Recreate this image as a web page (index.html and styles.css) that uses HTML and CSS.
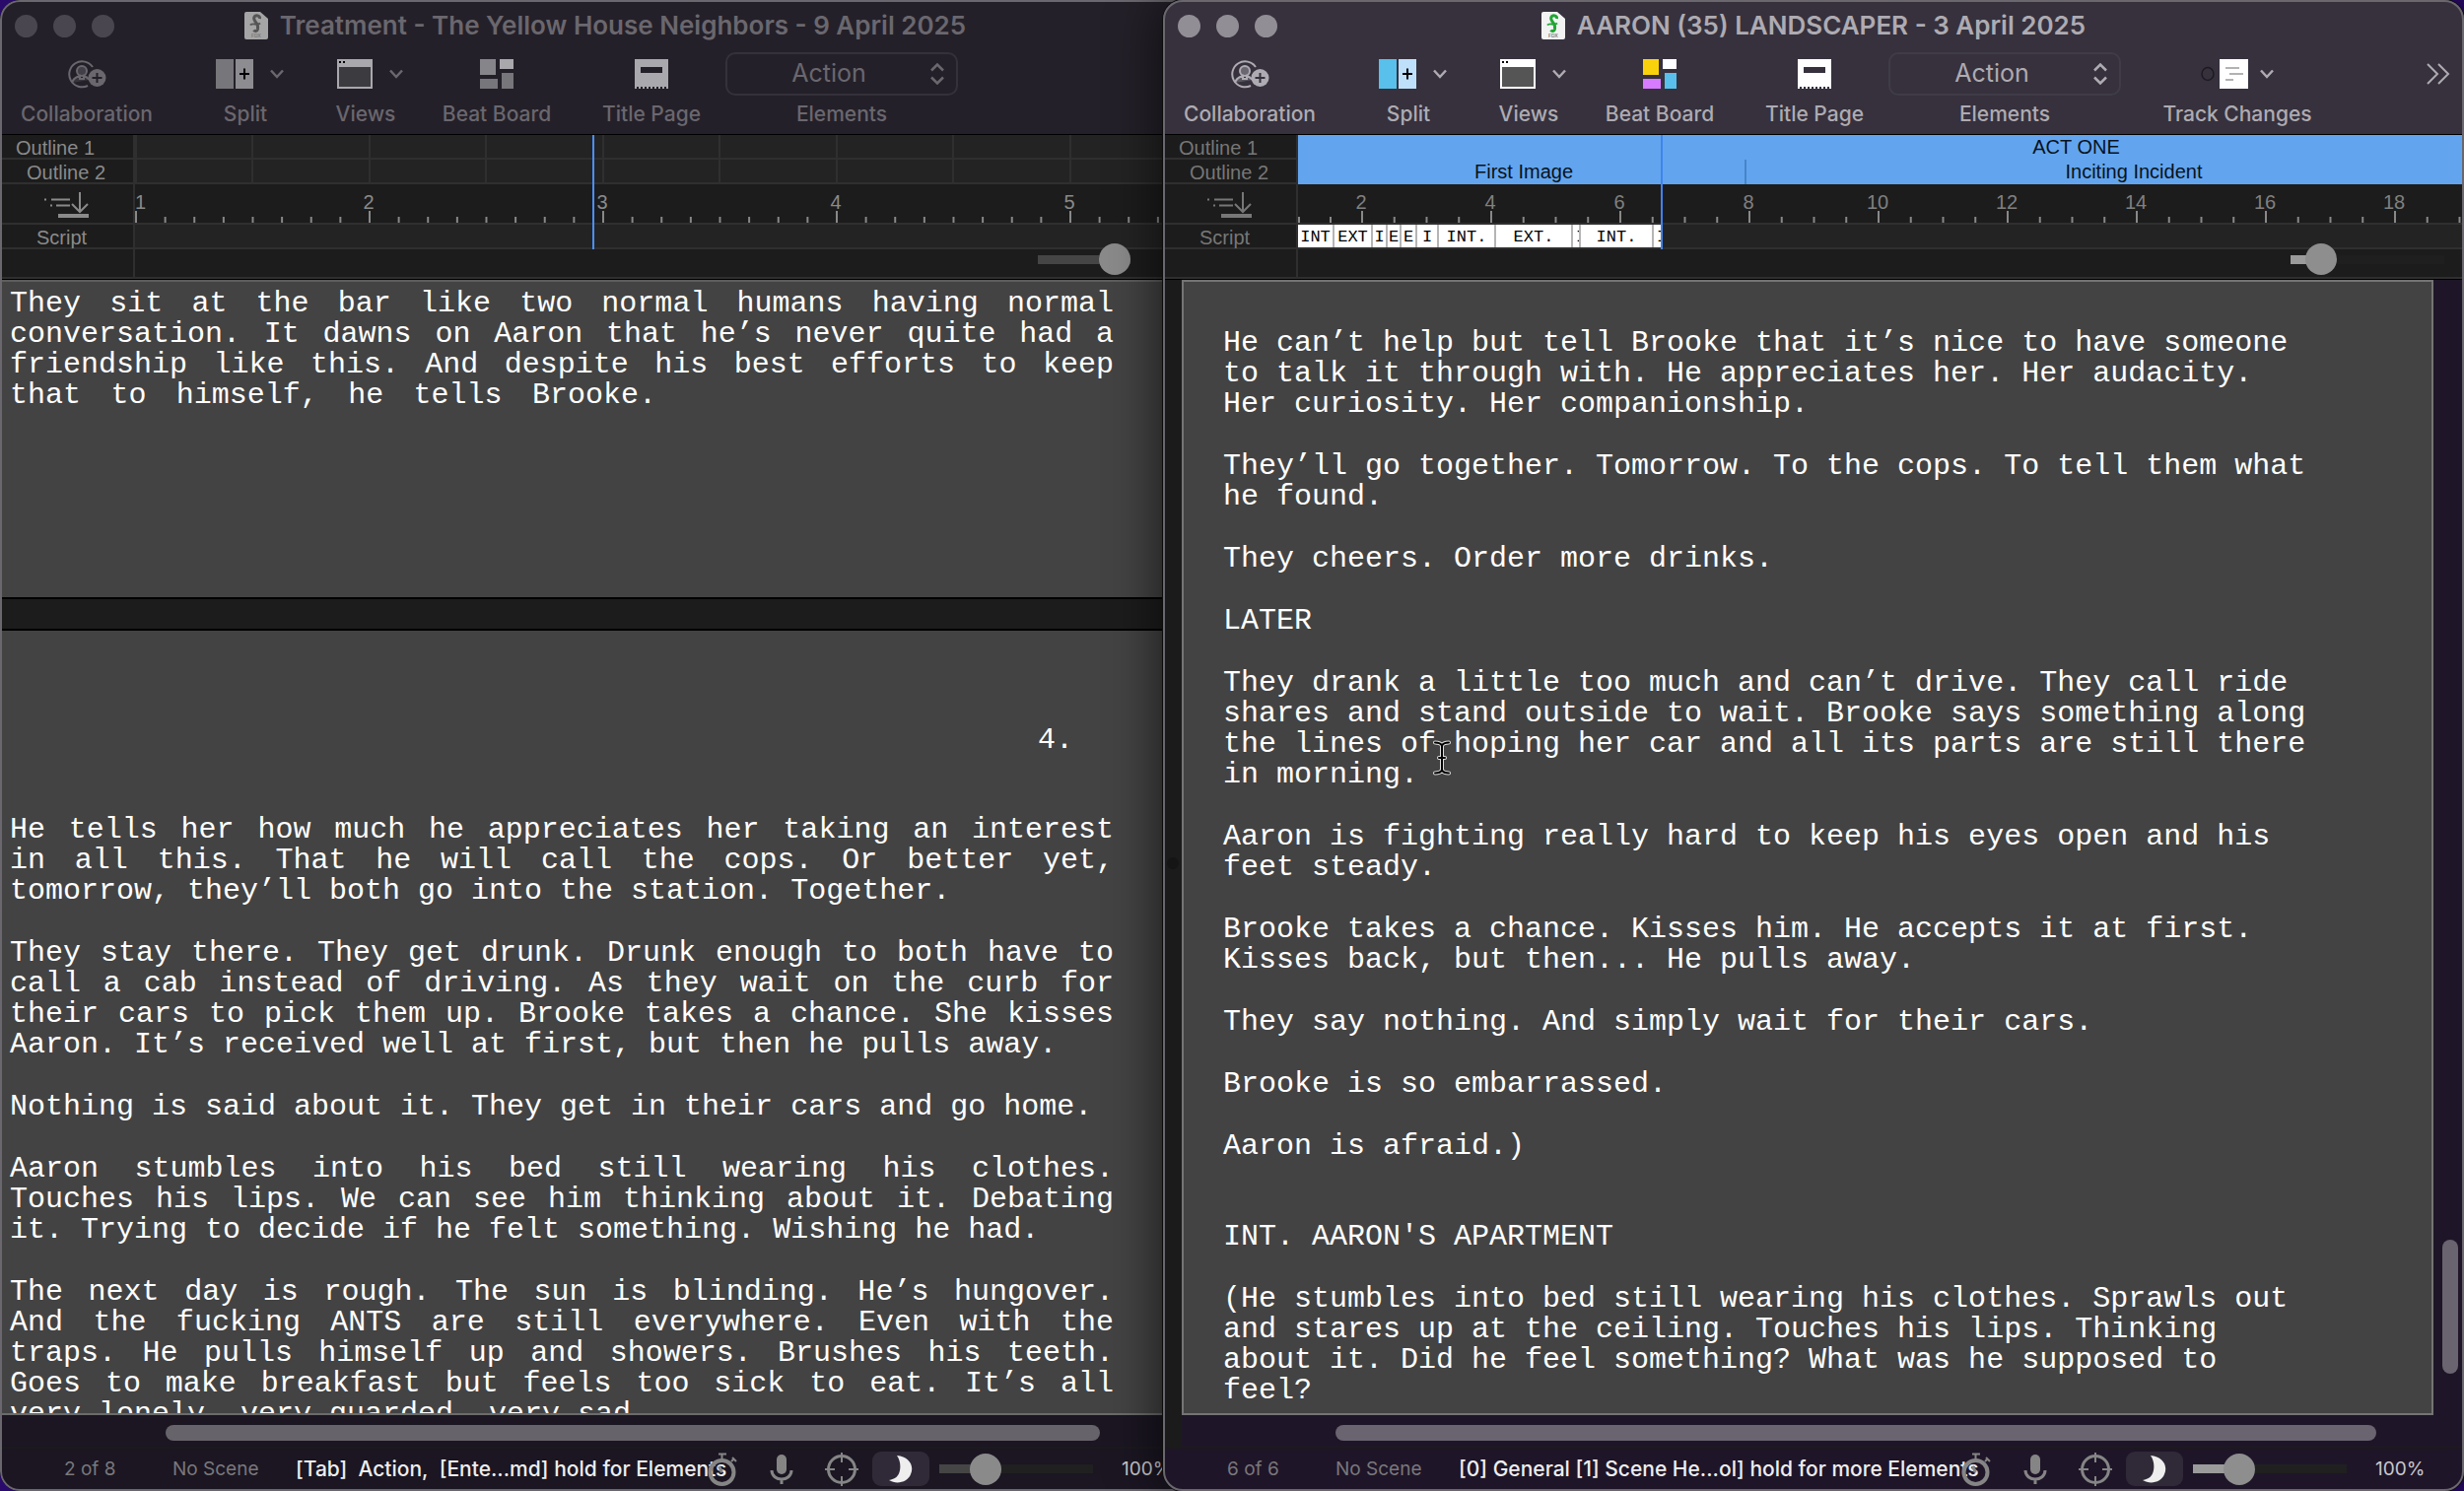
FILE: index.html
```html
<!DOCTYPE html>
<html lang="en">
<head>
<meta charset="utf-8">
<title>Script editor</title>
<link rel="stylesheet" href="styles.css">
</head>
<body>
<svg class="defs" aria-hidden="true">
  <defs>
    <symbol id="i-file" viewBox="0 0 24 28"><path class="sheet" d="M2 0h14l8 7v19a2 2 0 0 1-2 2H2a2 2 0 0 1-2-2V2a2 2 0 0 1 2-2z"/><path class="mark" d="M15.500 7c.5-3-3-4-5-2.500-2 2-.5 4 1 6 2 2 2.500 4 2 7-.5 2.500-3 2.500-4 1" fill="none" stroke-width="3"/><path class="mark" d="M6 13.500c2-3 7 1 10-2" fill="none" stroke-width="2"/><text class="ext" x="7" y="26" font-size="5">FDX</text></symbol>
    <symbol id="i-collab" viewBox="0 0 40 30"><g fill="none" stroke="currentColor" stroke-width="2"><path d="M26 8A13 13 0 1 0 21 27"/><circle cx="15" cy="12" r="5" fill="currentColor" fill-opacity=".45"/><path d="M5 24c1-5 5-6 8-7v3h4v-3c3 1 4 2 6 4" fill="currentColor" fill-opacity=".3"/></g><circle cx="30.500" cy="19" r="9" fill="currentColor"/><path class="cut" d="M30.500 14v10M25.500 19h10" stroke-width="2"/></symbol>
    <symbol id="i-split" viewBox="0 0 38 30"><path class="c-a" d="M0 0h18v30H0z"/><path class="c-b" d="M20 0h18v30H20z"/><path d="M29 9.500v11M24 15h10" stroke="#000" stroke-width="2"/></symbol>
    <symbol id="i-views" viewBox="0 0 36 30"><path class="c-w" d="M0 0h36v30H0z"/><path class="c-d" d="M2 8h32v20H2z"/><path d="M2 2h2v2H2zM6 2h2v2H6z"/></symbol>
    <symbol id="i-beat" viewBox="0 0 34 30"><path class="c-y" d="M0 0h16v16H0z"/><path class="c-w" d="M20 0h14v10H20z"/><path class="c-p" d="M0 20h18v10H0z"/><path class="c-a" d="M22 14h12v16H22z"/></symbol>
    <symbol id="i-title" viewBox="0 0 34 30"><path class="c-w" d="M0 0h34v30h-2v-2h-2v2h-2v-2h-2v2h-2v-2h-2v2h-2v-2h-2v2h-2v-2h-2v2h-2v-2h-2v2H8v-2H6v2H4v-2H2v2H0z"/><path class="cutfill" d="M6 8h22v6H6z"/></symbol>
    <symbol id="i-track" viewBox="0 0 48 30"><ellipse cx="7" cy="15" rx="6" ry="6.500" fill="none" stroke="#1d1b21" stroke-width="1.500"/><path fill="#fff" d="M19 0h30v30H19z"/><path d="M25 9h14M29 15h14M25 21h8" stroke="#999" stroke-width="1.500"/></symbol>
    <symbol id="i-chev" viewBox="0 0 14 10"><path d="M1 1.500l6 6.500 6-6.500" fill="none" stroke="currentColor" stroke-width="2.500"/></symbol>
    <symbol id="i-more" viewBox="0 0 24 22"><path d="M1 1l10 10L1 21M12 1l10 10-10 10" fill="none" stroke="currentColor" stroke-width="2"/></symbol>
    <symbol id="i-updown" viewBox="0 0 14 22"><path d="M1 7.500l6-6 6 6M1 14.500l6 6 6-6" fill="none" stroke="currentColor" stroke-width="2.500"/></symbol>
    <symbol id="i-outline" viewBox="0 0 46 28"><path d="M0 7.500h2M7 7.500h19M6 13.500h2M12 13.500h14" stroke="currentColor" stroke-width="2"/><path d="M36 0v19M28 12l8 8 8-8" fill="none" stroke="currentColor" stroke-width="2"/><path d="M14 22h31v4H14z" fill="currentColor"/></symbol>
    <symbol id="i-watch" viewBox="0 0 30 34"><g fill="none" stroke="currentColor"><circle cx="14.500" cy="20" r="12" stroke-width="4"/><path d="M11 1.500h8M14.500 1v6M25 5l4 4M27 6l-3 3" stroke-width="2"/><path d="M14.500 20l-3-6" stroke-width="3"/></g></symbol>
    <symbol id="i-mic" viewBox="0 0 24 30"><rect x="7" y="0" width="10" height="20" rx="5" fill="currentColor"/><path d="M2 16c0 12 20 12 20 0M12 25v5" fill="none" stroke="currentColor" stroke-width="3"/></symbol>
    <symbol id="i-aim" viewBox="0 0 34 34"><g fill="none" stroke="currentColor"><circle cx="17" cy="17" r="13.500" stroke-width="3"/><path d="M17 0v10M17 24v10M0 17h10M24 17h10" stroke-width="2"/></g></symbol>
    <symbol id="i-moon" viewBox="0 0 24 28"><path d="M8 0c12 1 18 10 14 19C19 27 8 30 0 25c6-1 10-4 11-10 1-5 0-11-3-15z" fill="currentColor"/></symbol>
  </defs>
</svg>
<main class="desktop">

<section class="window back">
  <header class="toolbar">
    <div class="titlebar">
      <div class="lights"><button aria-label="Close"></button><button aria-label="Minimize"></button><button aria-label="Zoom"></button></div>
      <h1><svg width="24" height="28"><use href="#i-file"/></svg>Treatment - The Yellow House Neighbors - 9 April 2025</h1>
    </div>
    <div class="tools">
      <button class="tool collab"><span class="glyph"><svg width="40" height="30"><use href="#i-collab"/></svg></span>Collaboration</button>
      <button class="tool split"><span class="glyph"><svg width="38" height="30"><use href="#i-split"/></svg><svg width="14" height="10"><use href="#i-chev"/></svg></span>Split</button>
      <button class="tool views"><span class="glyph"><svg width="36" height="30"><use href="#i-views"/></svg><svg width="14" height="10"><use href="#i-chev"/></svg></span>Views</button>
      <button class="tool beat"><span class="glyph"><svg width="34" height="30"><use href="#i-beat"/></svg></span>Beat Board</button>
      <button class="tool page"><span class="glyph"><svg width="34" height="30"><use href="#i-title"/></svg></span>Title Page</button>
      <label class="tool elements"><span class="glyph picker"><select><option>Action</option></select><svg width="14" height="22"><use href="#i-updown"/></svg></span>Elements</label>
    </div>
  </header>
  <div class="timeline">
    <div class="row"><span class="head one">Outline 1</span><div class="lane grid"></div></div>
    <div class="row"><span class="head two">Outline 2</span><div class="lane grid"></div></div>
    <div class="row tall"><span class="head icon"><svg width="46" height="28"><use href="#i-outline"/></svg></span>
      <div class="lane ruler wide"><div class="unit first"><span>1</span></div><div class="unit"><span>2</span></div><div class="unit"><span>3</span></div><div class="unit"><span>4</span></div><div class="unit"><span>5</span></div></div></div>
    <div class="row"><span class="head script">Script</span><div class="lane"></div></div>
    <div class="row last"><span class="head"></span><div class="lane zoom"><input type="range" class="slider low" aria-label="Timeline zoom" value="100"></div></div>
    <i class="playhead"></i>
  </div>
  <div class="body">
    <div class="paper">
      <article class="sheet-a">
        <p><span>They sit at the bar like two normal humans having normal</span><span>conversation. It dawns on Aaron that he’s never quite had a</span><span>friendship like this. And despite his best efforts to keep</span><span class="part">that to himself, he tells Brooke.</span></p>
      </article>
      <article class="sheet-b">
        <div class="number">4.</div>
        <p><span>He tells her how much he appreciates her taking an interest</span><span>in all this. That he will call the cops. Or better yet,</span><span class="end">tomorrow, they’ll both go into the station. Together.</span></p>
        <p><span>They stay there. They get drunk. Drunk enough to both have to</span><span>call a cab instead of driving. As they wait on the curb for</span><span>their cars to pick them up. Brooke takes a chance. She kisses</span><span class="end">Aaron. It’s received well at first, but then he pulls away.</span></p>
        <p><span class="end">Nothing is said about it. They get in their cars and go home.</span></p>
        <p><span>Aaron stumbles into his bed still wearing his clothes.</span><span>Touches his lips. We can see him thinking about it. Debating</span><span class="end">it. Trying to decide if he felt something. Wishing he had.</span></p>
        <p><span>The next day is rough. The sun is blinding. He’s hungover.</span><span>And the fucking ANTS are still everywhere. Even with the</span><span>traps. He pulls himself up and showers. Brushes his teeth.</span><span>Goes to make breakfast but feels too sick to eat. It’s all</span><span class="end">very lonely, very guarded, very sad.</span></p>
      </article>
    </div>
    <div class="hscroll"><i></i></div>
  </div>
  <footer class="status">
    <span class="count">2 of 8</span><span class="scene">No Scene</span><span class="hint">[Tab]&nbsp; Action,&nbsp; [Ente...md] hold for Elements</span>
    <button aria-label="Timer" class="watch"><svg width="30" height="34"><use href="#i-watch"/></svg></button>
    <button aria-label="Dictate" class="mic"><svg width="24" height="30"><use href="#i-mic"/></svg></button>
    <button aria-label="Focus" class="aim"><svg width="34" height="34"><use href="#i-aim"/></svg></button>
    <button aria-label="Night mode" class="moon"><svg width="24" height="28"><use href="#i-moon"/></svg></button>
    <input type="range" class="slider" aria-label="Page zoom" value="25"><span class="percent">100%</span>
  </footer>
</section>

<section class="window front">
  <header class="toolbar">
    <div class="titlebar">
      <div class="lights"><button aria-label="Close"></button><button aria-label="Minimize"></button><button aria-label="Zoom"></button></div>
      <h1><svg width="24" height="28"><use href="#i-file"/></svg>AARON (35) LANDSCAPER - 3 April 2025</h1>
    </div>
    <div class="tools">
      <button class="tool collab"><span class="glyph"><svg width="40" height="30"><use href="#i-collab"/></svg></span>Collaboration</button>
      <button class="tool split"><span class="glyph"><svg width="38" height="30"><use href="#i-split"/></svg><svg width="14" height="10"><use href="#i-chev"/></svg></span>Split</button>
      <button class="tool views"><span class="glyph"><svg width="36" height="30"><use href="#i-views"/></svg><svg width="14" height="10"><use href="#i-chev"/></svg></span>Views</button>
      <button class="tool beat"><span class="glyph"><svg width="34" height="30"><use href="#i-beat"/></svg></span>Beat Board</button>
      <button class="tool page"><span class="glyph"><svg width="34" height="30"><use href="#i-title"/></svg></span>Title Page</button>
      <label class="tool elements"><span class="glyph picker"><select><option>Action</option></select><svg width="14" height="22"><use href="#i-updown"/></svg></span>Elements</label>
      <button class="tool track"><span class="glyph"><svg width="48" height="30"><use href="#i-track"/></svg><svg width="14" height="10"><use href="#i-chev"/></svg></span>Track Changes</button>
      <button class="more" aria-label="More tools"><svg width="24" height="22"><use href="#i-more"/></svg></button>
    </div>
  </header>
  <div class="timeline">
    <div class="row"><span class="head one">Outline 1</span><div class="lane beats"><span class="act">ACT ONE</span></div></div>
    <div class="row"><span class="head two">Outline 2</span><div class="lane beats"><span class="beat-a">First Image</span><span class="beat-b">Inciting Incident</span></div></div>
    <div class="row tall"><span class="head icon"><svg width="46" height="28"><use href="#i-outline"/></svg></span>
      <div class="lane ruler"><div class="unit lead"></div><div class="unit"><span>2</span></div><div class="unit"><span>4</span></div><div class="unit"><span>6</span></div><div class="unit"><span>8</span></div><div class="unit"><span>10</span></div><div class="unit"><span>12</span></div><div class="unit"><span>14</span></div><div class="unit"><span>16</span></div><div class="unit"><span>18</span></div></div></div>
    <div class="row"><span class="head script">Script</span><div class="lane scenes"><b style="width:37px">INT</b><b style="width:39px">EXT</b><b style="width:15px">I</b><b style="width:14px">E</b><b style="width:16px">E</b><b style="width:22px">I</b><b style="width:58px">INT.</b><b style="width:78px">EXT.</b><b class="slim" style="width:8px">I</b><b style="width:74px">INT.</b><b class="slim" style="width:9px">I</b></div></div>
    <div class="row last"><span class="head"></span><div class="lane zoom"><input type="range" class="slider lean" aria-label="Timeline zoom" value="12"></div></div>
    <i class="playhead"></i>
  </div>
  <div class="body">
    <div class="gutter"><i></i></div>
    <div class="view">
      <div class="paper">
        <article>
          <p>He can’t help but tell Brooke that it’s nice to have someone<br>to talk it through with. He appreciates her. Her audacity.<br>Her curiosity. Her companionship.</p>
          <p>They’ll go together. Tomorrow. To the cops. To tell them what<br>he found.</p>
          <p>They cheers. Order more drinks.</p>
          <p>LATER</p>
          <p>They drank a little too much and can’t drive. They call ride<br>shares and stand outside to wait. Brooke says something along<br>the lines of hoping her car and all its parts are still there<br>in morning.</p>
          <p>Aaron is fighting really hard to keep his eyes open and his<br>feet steady.</p>
          <p>Brooke takes a chance. Kisses him. He accepts it at first.<br>Kisses back, but then... He pulls away.</p>
          <p>They say nothing. And simply wait for their cars.</p>
          <p>Brooke is so embarrassed.</p>
          <p>Aaron is afraid.)</p>
          <p class="slug">INT. AARON'S APARTMENT</p>
          <p>(He stumbles into bed still wearing his clothes. Sprawls out<br>and stares up at the ceiling. Touches his lips. Thinking<br>about it. Did he feel something? What was he supposed to<br>feel?</p>
        </article>
        <svg class="ibeam" width="18" height="36" viewBox="0 0 18 36"><g fill="none" stroke-linecap="round"><path d="M2 2.500c3 0 6 1 7 3 1-2 4-3 7-3M9 5v26M2 33.500c3 0 6-1 7-3 1 2 4 3 7 3M6 18h6" stroke="#ddd" stroke-width="4"/><path d="M2 2.500c3 0 6 1 7 3 1-2 4-3 7-3M9 5v26M2 33.500c3 0 6-1 7-3 1 2 4 3 7 3M6 18h6" stroke="#000" stroke-width="2"/></g></svg>
      </div>
      <div class="vscroll"><i></i></div>
      <div class="hscroll"><i></i></div>
    </div>
  </div>
  <footer class="status">
    <span class="count">6 of 6</span><span class="scene">No Scene</span><span class="hint">[0] General [1] Scene He...ol] hold for more Elements</span>
    <button aria-label="Timer" class="watch"><svg width="30" height="34"><use href="#i-watch"/></svg></button>
    <button aria-label="Dictate" class="mic"><svg width="24" height="30"><use href="#i-mic"/></svg></button>
    <button aria-label="Focus" class="aim"><svg width="34" height="34"><use href="#i-aim"/></svg></button>
    <button aria-label="Night mode" class="moon"><svg width="24" height="28"><use href="#i-moon"/></svg></button>
    <input type="range" class="slider" aria-label="Page zoom" value="25"><span class="percent">100%</span>
  </footer>
</section>
</main>
</body>
</html>
```

FILE: styles.css
```css
* { box-sizing: border-box; }
body { margin: 0; background: #2a0a6b; font-family: Inter, "Liberation Sans", sans-serif; }
button { border: 0; padding: 0; background: none; color: inherit; font: inherit; }
svg { display: block; flex: none; }
.defs { position: absolute; width: 0; height: 0; }

.desktop { display: grid; grid-template-columns: 47.2% 52.8%; height: 100vh; overflow: hidden; }

.window {
  --bar: #36313d; --ink: #aeabb2; --head: #808080; --line: #2f2f2f; --base: #1f1528;
  --knob: #8e8e8e; --fill: #9b9b9b; --thumb: #69646f;
  --a: #58c0ea; --b: #bfe0fb; --w: #fff; --d: #555; --y: #fad20c; --p: #d77bff;
  --file: #f2f2f2; --mark: #21a634;
  position: relative; display: flex; flex-direction: column; min-width: 0; height: 100vh;
  border-radius: 20px; overflow: hidden; background: var(--base); color: var(--ink);
}
.window::after { content: ""; position: absolute; inset: 0; border: 2px solid #6a676e; border-radius: 20px; pointer-events: none; }
.back {
  --bar: #242029; --ink: #6a676e; --head: #8a8a8a; --base: #1b1622;
  --knob: #8a8a8a; --fill: #454545; --thumb: #67636b;
  --a: #77767a; --b: #8d8c90; --w: #a9a8ac; --d: #3c3b3f; --y: #86858a; --p: #77767a;
  --file: #a5a5a5; --mark: #555;
  margin-right: -48px;
}
.front { z-index: 1; overflow: visible; box-shadow: 0 0 50px 4px rgba(0, 0, 0, .6), 0 0 0 1px #111; }
.front .toolbar { border-radius: 20px 20px 0 0; }

.c-a { fill: var(--a); } .c-b { fill: var(--b); } .c-w { fill: var(--w); } .c-d { fill: var(--d); }
.c-y { fill: var(--y); } .c-p { fill: var(--p); }
.cut { stroke: var(--bar); } .cutfill { fill: var(--bar); }
.sheet { fill: var(--file); } .mark { stroke: var(--mark); } .ext { fill: #777; }

.toolbar { flex: none; height: 137px; background: var(--bar); border-bottom: 1px solid #000; }
.titlebar { position: relative; display: flex; align-items: center; justify-content: center; height: 52px; }
.lights { position: absolute; left: 15px; display: flex; gap: 16px; }
.lights button { width: 23px; height: 23px; border-radius: 50%; background: #928e96; }
.back .lights button { background: #4a464f; }
h1 { display: flex; align-items: center; gap: 12px; margin: 0; font-size: 26px; line-height: 30px; font-weight: 600; white-space: nowrap; }

.tools { display: flex; }
.tool { display: flex; flex: none; flex-direction: column; align-items: center; font-size: 21px; line-height: 24px; font-weight: 500; white-space: nowrap; }
.glyph { display: flex; align-items: center; justify-content: center; gap: 17px; height: 46px; margin-bottom: 6px; }
.collab { width: 176px; } .split { width: 146px; } .views { width: 98px; } .beat { width: 168px; }
.page { width: 146px; } .elements { width: 240px; } .track { width: 232px; }
.split .glyph, .views .glyph { padding-left: 8px; }
.track .glyph { gap: 12px; }
.picker { position: relative; }
.picker svg { position: absolute; right: 14px; }
.picker select { appearance: none; width: 236px; height: 44px; padding: 0 26px 2px 0; border: 2px solid #403c47; border-radius: 10px; background: none; color: inherit; font: 400 25px Inter, sans-serif; text-align-last: center; }
.back .picker select { border-color: #35313b; }
.more { display: flex; align-items: center; height: 46px; margin: 0 14px 0 auto; }

.timeline { position: relative; flex: none; overflow: hidden; background: #1c1c1c; border-bottom: 1px solid #000; font: 20px "Liberation Sans", sans-serif; }
.row { display: flex; height: 25px; border-bottom: 2px solid var(--line); }
.row.tall { height: 41px; }
.row.last { height: 30px; }
.head { flex: none; display: flex; align-items: center; width: 137px; padding-top: 4px; border-right: 2px solid var(--line); color: var(--head); }
.front .head { color: #777; }
.one { padding-left: 16px; } .two { padding-left: 27px; } .script { padding-left: 37px; } .icon { padding-left: 45px; }
.lane { flex: 1; min-width: 0; display: flex; background: #232323; }
.grid { background-image: linear-gradient(90deg, #2f2f2f 2px, transparent 2px), linear-gradient(90deg, #2f2f2f 2px, transparent 2px); background-size: 237px 100%; background-position: 0 0, 118px 0; }
.ruler { background: #1c1c1c; overflow: hidden; color: var(--head); }
.unit { position: relative; flex: 0 0 131px; padding-top: 7px; line-height: 22px; background: linear-gradient(90deg, #888 2px, transparent 2px) 0 100% / 25% 6px repeat-x; }
.wide .unit { flex-basis: 237px; background-size: 12.5% 6px; }
.unit.lead { flex-basis: 64px; background-size: 50% 6px; }
.unit span { display: block; width: 40px; margin-left: -20px; text-align: center; }
.unit.first span { margin-left: 0; text-align: left; }
.unit:not(.lead)::after { content: ""; position: absolute; left: 0; bottom: 0; width: 2px; height: 12px; background: #888; }
.beats { background: #62a5ee; color: #0a121c; margin-bottom: -2px; }
.act { margin-left: 63%; }
.beat-a { width: 455px; padding-left: 179px; border-right: 2px solid #4584c9; }
.beat-b { flex: 1; text-align: center; padding-left: 58px; }
.act, .beat-a, .beat-b { line-height: 24px; }
.scenes b { flex: none; display: flex; justify-content: center; overflow: hidden; background: #fff; border-right: 2px solid #b5b5b5; color: #000; font: 17px/25px "Liberation Mono", monospace; }
.scenes .slim { justify-content: flex-start; padding-left: 3px; }
.zoom { background: #1c1c1c; align-items: flex-start; justify-content: flex-end; }
.zoom .slider { margin-top: -6px; }
.playhead { position: absolute; left: 601px; top: 0; width: 2px; height: 116px; background: #4a90f5; }
.front .playhead { left: 505px; background: #3f83ee; }

.slider { appearance: none; flex: none; width: 156px; height: 32px; margin: 0; background: linear-gradient(90deg, var(--fill) 26%, #202020 26%) center / 100% 9px no-repeat; }
.slider::-webkit-slider-thumb { appearance: none; width: 32px; height: 32px; border-radius: 50%; background: var(--knob); }
.low { width: 94px; margin-right: 81px; background-image: linear-gradient(#454545, #454545); }
.lean { margin-right: 20px; background-image: linear-gradient(90deg, #9b9b9b 16%, #1f1f1f 16%); }

.body { flex: 1; min-height: 0; display: flex; }
.back .body { flex-direction: column; }
.paper { position: relative; flex: 1; min-height: 0; overflow: hidden; background: #434343; color: #fff; font: 30px/31px "Liberation Mono", monospace; white-space: nowrap; }
.back .paper { border-top: 2px solid #5d5d5d; border-bottom: 2px solid #6b6b6b; background: #1c1c1c; }
article p { margin: 0 0 32px; }
.front article { padding: 47px 0 0 40px; }
.front article .slug { margin-top: 61px; }
.back article { padding-left: 10px; background: #434343; }
.back .sheet-a { height: 320px; padding-top: 7px; margin-bottom: 34px; box-shadow: 0 2px #000; }
.back .sheet-b { padding-top: 96px; box-shadow: 0 -2px #000; }
.back p { width: 1130px; }
.back p span { display: block; width: 1120px; text-align-last: justify; }
.back p .end { text-align-last: start; }
.back p .part { width: 656px; }
.number { width: 1079px; margin-bottom: 60px; text-align: right; }

.hscroll { flex: none; height: 32px; padding: 10px 112px 0 168px; }
.hscroll i { display: block; height: 16px; border-radius: 8px; background: var(--thumb); }
.gutter { flex: none; display: flex; align-items: center; justify-content: center; width: 19px; background: #1b1b1b; }
.gutter i { width: 12px; height: 12px; border-radius: 50%; background: #151515; }
.view { flex: 1; min-width: 0; display: grid; grid-template: 1fr 32px / 1fr 31px; }
.view .paper { border: 2px solid #747474; }
.view .hscroll { grid-column: 1 / 3; padding: 10px 89px 0 156px; }
.vscroll { display: flex; align-items: flex-end; justify-content: center; padding: 0 0 42px 2px; }
.vscroll i { width: 16px; height: 136px; border-radius: 8px; background: var(--thumb); }
.ibeam { position: absolute; left: 253px; top: 465px; }

.status { flex: none; display: flex; align-items: center; height: 45px; padding: 0 39px 2px 65px; border-top: 2px solid #1c1a1c; color: #7a787c; white-space: nowrap; }
.count, .scene { flex: none; font-size: 19px; }
.count { width: 110px; } .scene { width: 125px; }
.hint { flex: 1; min-width: 0; color: #eee; font-size: 21px; font-weight: 500; }
.status button { flex: none; color: #858585; }
.watch { margin-right: 33px; } .mic { margin-right: 32px; } .aim { margin-right: 14px; }
.status .moon { display: flex; align-items: center; justify-content: center; width: 58px; height: 35px; margin-right: 10px; border-radius: 9px; background: #302a38; color: #eee; }
.percent { flex: none; width: 80px; padding-left: 29px; color: #c9c7cc; font-size: 19px; }
```
